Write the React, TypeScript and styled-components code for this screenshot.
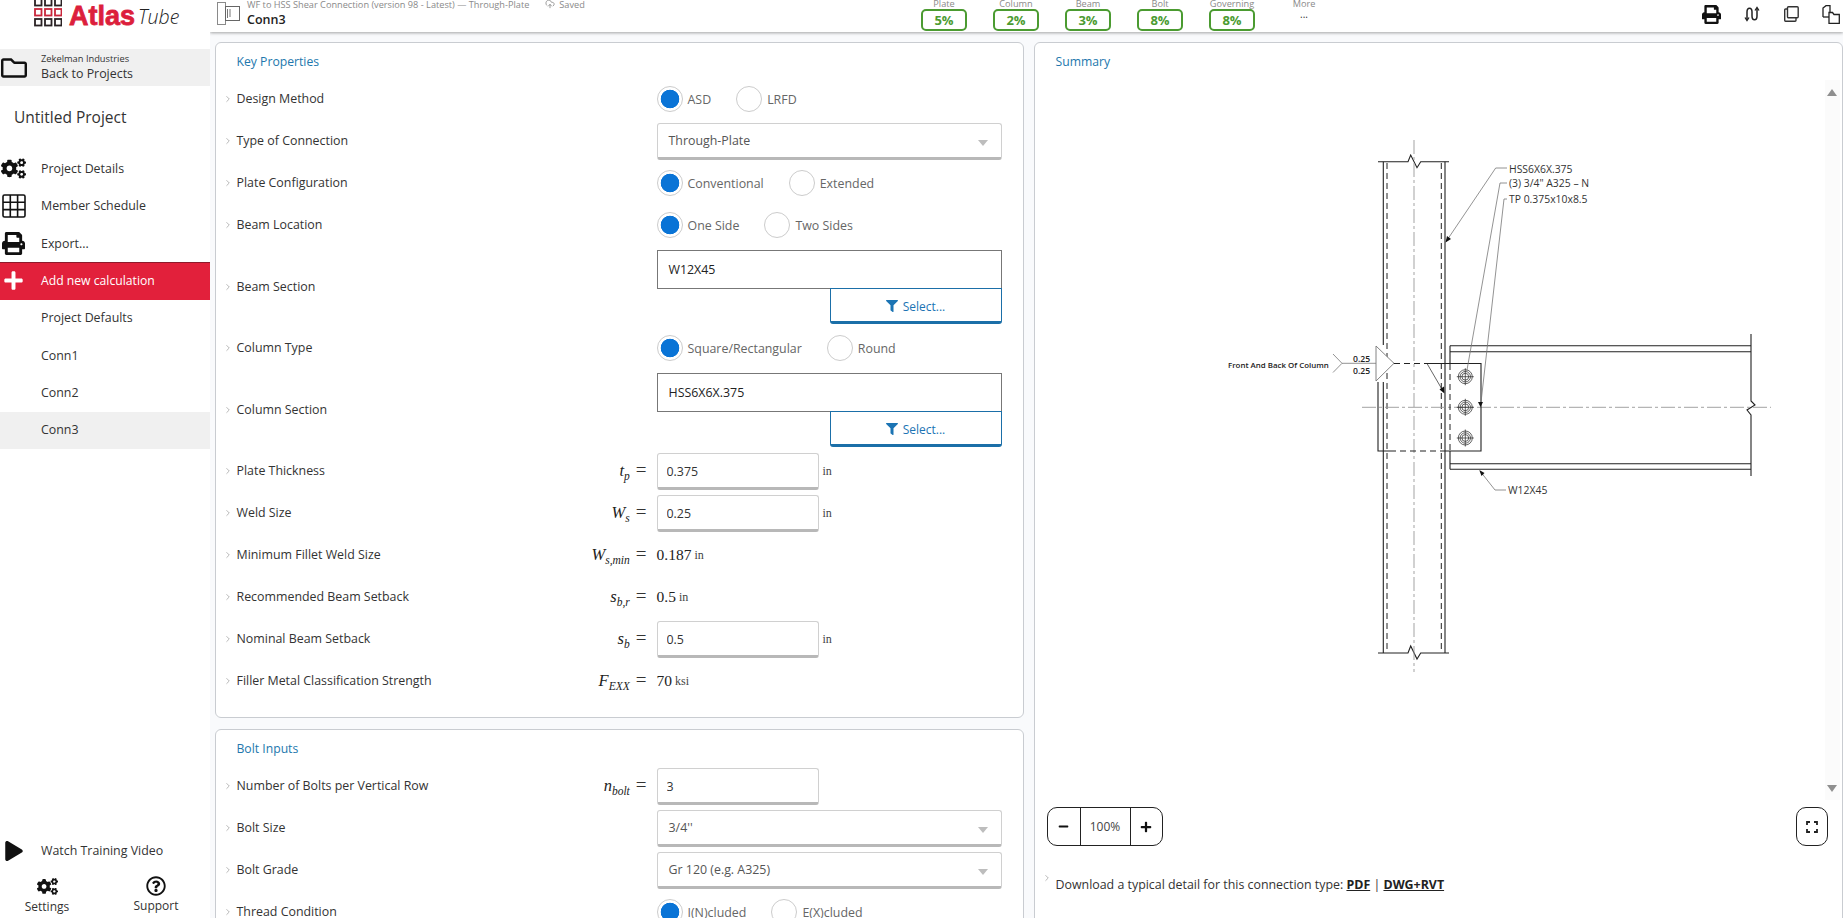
import styled, { createGlobalStyle } from 'styled-components'
import { FaCogs, FaFilter, FaMinus, FaPlay, FaPlus, FaPrint, FaRegFolder, FaRegQuestionCircle } from 'react-icons/fa'
import { ChevronRight, CloudUpload } from 'lucide-react'

const Global = createGlobalStyle`
  html, body { margin: 0; padding: 0; height: 100%; overflow: hidden; }
  body { font-family: "Open Sans", "Liberation Sans", sans-serif; color: #333; background: #fff; }
  * { box-sizing: border-box; }
`

const navItems = ['Project Defaults', 'Conn1', 'Conn2']
const badges = [
  { label: 'Plate', value: '5%' },
  { label: 'Column', value: '2%' },
  { label: 'Beam', value: '3%' },
  { label: 'Bolt', value: '8%' },
  { label: 'Governing', value: '8%' },
]
const bolts = [376.7, 407.3, 438]

const Arrow = () => <Chevron><ChevronRight size={10} strokeWidth={2} /></Chevron>

const LogoSquares = () => (
  <svg width="28" height="27" viewBox="0 0 28 27">
    {[0, 1, 2].map(r =>
      [0, 1, 2].map(c => (
        <rect key={`${r}${c}`} x={1 + c * 10} y={-1 + r * 10} width="6.5" height="6.5" fill="none"
          stroke={r === 1 ? '#c8273c' : '#2a2224'} strokeWidth="1.8" />
      ))
    )}
  </svg>
)

const GridIcon = () => (
  <svg width="24" height="24" viewBox="0 0 24 24" fill="none" stroke="#111" strokeWidth="1.6">
    <rect x="1" y="1" width="22" height="22" rx="1.5" />
    <path d="M8.3 1v22M15.6 1v22M1 8.3h22M1 15.6h22" />
  </svg>
)

const ConnGlyph = () => (
  <svg width="23" height="23" viewBox="0 0 23 23" fill="none" stroke="#8a8a8a" strokeWidth="1">
    <rect x="0.5" y="0.5" width="8" height="22" />
    <rect x="8.5" y="4.5" width="14" height="14" stroke="#666" />
    <path d="M10.5 7v9M12 8h2M12 10h2M12 12h2M12 14h2" stroke="#777" />
  </svg>
)

const SwapIcon = () => (
  <svg width="16" height="16" viewBox="0 0 16 16" fill="none" stroke="#222" strokeWidth="1.5">
    <path d="M3 14V6c0-5 5-5 5 0v4c0 5 5 5 5 0V2" />
    <path d="M1 11.5 3 14.5 5 11.5M11 4.5 13 1.5 15 4.5" strokeWidth="1.3" />
  </svg>
)

const CopyIcon = () => (
  <svg width="15" height="16" viewBox="0 0 15 16" fill="none" stroke="#333" strokeWidth="1.4">
    <rect x="3.5" y="0.8" width="10.7" height="11" rx="1" />
    <path d="M3.5 3H1.5a.8.8 0 0 0-.8.8v10.5c0 .5.3.9.8.9h9.6c.5 0 .9-.4.9-.9v-2.5" />
  </svg>
)

const FilesIcon = () => (
  <svg width="18" height="19" viewBox="0 0 18 19" fill="none" stroke="#222" strokeWidth="1.3">
    <path d="M1 12V3l3-2.3h4V7" />
    <path d="M1 12h6" />
    <path d="M7 7.5h3.5l1.5 2h5.3v8.8H7z" />
  </svg>
)

const CornersIcon = () => (
  <svg width="12" height="12" viewBox="0 0 12 12" fill="none" stroke="#222" strokeWidth="1.8">
    <path d="M1 4V1h3M8 1h3v3M1 8v3h3M8 11h3V8" />
  </svg>
)

const Drawing = () => (
  <svg width="580" height="550" viewBox="1210 130 580 550">
    {/* column */}
    <Heavy d="M1378 161.7H1408L1410.7 155L1417 167.7L1420.7 161.7H1449" />
    <Heavy d="M1378 653H1408L1410.7 646L1417 659L1420.7 653H1449" />
    <Heavy d="M1383.3 161.7V345M1383.3 382V653M1445 161.7V653" />
    <Dash d="M1387 163V653M1441.3 163V653" />
    <Centre d="M1414 140V672" />
    {/* beam */}
    <Heavy d="M1450 345.7H1751M1450 351.7H1751M1450 463.7H1751M1450 469.3H1751" />
    <Heavy d="M1450 345.7V363.5M1450 451V469.3" />
    <Heavy d="M1751 334V401L1755 405L1747 410L1751 415V476" strokeWidth="1" />
    <Centre d="M1362 407.3H1771" />
    {/* plate */}
    <Heavy d="M1427 363.5H1481V451H1445" />
    <Heavy d="M1378 382V451H1390" />
    <Dash d="M1394 363.5H1445M1390 451H1445M1450 364V451" />
    {bolts.map(y => (
      <g key={y}>
        <Thin as="circle" cx="1465.3" cy={y} r="7" />
        <Thin as="circle" cx="1465.3" cy={y} r="5.2" />
        <Thin as="circle" cx="1465.3" cy={y} r="3.4" />
        <Thin d={`M1465.3 ${y - 8.5}V${y + 8.5}M1456.8 ${y}H1473.8`} />
      </g>
    ))}
    {/* weld symbol */}
    <Grey d="M1333 354L1342 363.3L1333 372.5M1342 363.3H1394" />
    <WeldMark d="M1376 346L1394 363.3L1376 381Z" />
    <Thin d="M1427 363.5L1443 391" />
    <path d="M1444.5 393.5L1439.5 389.5L1444 386.5Z" fill="#111" />
    <DrawingBold x="1228" y="368">Front And Back Of Column</DrawingBold>
    <WeldSize x="1353" y="362">0.25</WeldSize>
    <WeldSize x="1353" y="373.5">0.25</WeldSize>
    {/* leaders */}
    <Grey d="M1507 168H1495.7L1446 241.7" />
    <path d="M1445.5 242.5L1447 236L1451 239Z" fill="#111" />
    <DrawingText x="1509" y="173">HSS6X6X.375</DrawingText>
    <Grey d="M1507 183H1500L1466.7 371.7" />
    <DrawingText x="1509" y="187.4">(3) 3/4" A325 – N</DrawingText>
    <Grey d="M1507 199H1504L1480.7 405" />
    <path d="M1480.5 407L1478 402H1483Z" fill="#111" />
    <DrawingText x="1509" y="203">TP 0.375x10x8.5</DrawingText>
    <Grey d="M1506 490H1495L1480 471" />
    <path d="M1479.3 470L1484.5 473L1481.5 476Z" fill="#111" />
    <DrawingText x="1508" y="493.7">W12X45</DrawingText>
  </svg>
)

const App = () => {
  return (
    <Page>
      <Global />
      <Sidebar>
        <LogoBar>
          <LogoSquares />
          <LogoAtlas>Atlas</LogoAtlas>
          <LogoTube>Tube</LogoTube>
        </LogoBar>
        <BackRow>
          <IconSlot><FaRegFolder size={26} color="#111" /></IconSlot>
          <BackText>
            <BackCompany>Zekelman Industries</BackCompany>
            <span>Back to Projects</span>
          </BackText>
        </BackRow>
        <ProjectName>Untitled Project</ProjectName>
        <NavItem><IconSlot><FaCogs size={25} color="#111" /></IconSlot>Project Details</NavItem>
        <NavItem><IconSlot><GridIcon /></IconSlot>Member Schedule</NavItem>
        <NavItem><IconSlot><FaPrint size={23} color="#111" /></IconSlot>Export...</NavItem>
        <AddItem><IconSlot><FaPlus size={21} color="#fff" /></IconSlot>Add new calculation</AddItem>
        {navItems.map(n => (
          <NavItem key={n}><IconSlot />{n}</NavItem>
        ))}
        <NavItem $active><IconSlot />Conn3</NavItem>
        <SideFooter>
          <NavItem><IconSlot><FaPlay size={20} color="#111" /></IconSlot>Watch Training Video</NavItem>
          <FooterLinks>
            <FooterLink><FaCogs size={21} color="#111" />Settings</FooterLink>
            <FooterLink $second><FaRegQuestionCircle size={20} color="#111" />Support</FooterLink>
          </FooterLinks>
        </SideFooter>
      </Sidebar>

      <Main>
        <Header>
          <GlyphSlot><ConnGlyph /></GlyphSlot>
          <TitleBlock>
            <TitleLine>
              <span>WF to HSS Shear Connection (version 98 - Latest) — Through-Plate</span>
              <SavedTag><CloudUpload size={10} />Saved</SavedTag>
            </TitleLine>
            <ConnName>Conn3</ConnName>
          </TitleBlock>
          <Badges>
            {badges.map(b => (
              <BadgeCol key={b.label}>
                <BadgeLabel>{b.label}</BadgeLabel>
                <Badge>{b.value}</Badge>
              </BadgeCol>
            ))}
            <BadgeCol>
              <BadgeLabel>More</BadgeLabel>
              <MoreDots>...</MoreDots>
            </BadgeCol>
          </Badges>
          <HeaderTools>
            <FaPrint size={19} color="#111" />
            <SwapIcon />
            <CopyIcon />
            <FilesIcon />
          </HeaderTools>
        </Header>

        <Content>
          <FormColumn>
            <Panel>
              <PanelTitle>Key Properties</PanelTitle>
              <Row>
                <Arrow /><RowLabel>Design Method</RowLabel><MathCell />
                <Radios>
                  <Radio $on>ASD</Radio>
                  <Radio>LRFD</Radio>
                </Radios>
              </Row>
              <Row>
                <Arrow /><RowLabel>Type of Connection</RowLabel><MathCell />
                <SelectBox>Through-Plate</SelectBox>
              </Row>
              <Row>
                <Arrow /><RowLabel>Plate Configuration</RowLabel><MathCell />
                <Radios>
                  <Radio $on>Conventional</Radio>
                  <Radio>Extended</Radio>
                </Radios>
              </Row>
              <Row>
                <Arrow /><RowLabel>Beam Location</RowLabel><MathCell />
                <Radios>
                  <Radio $on>One Side</Radio>
                  <Radio>Two Sides</Radio>
                </Radios>
              </Row>
              <Row $tall>
                <Arrow /><RowLabel>Beam Section</RowLabel><MathCell />
                <SectionField>
                  <SectionValue>W12X45</SectionValue>
                  <SelectButton><FaFilter size={12} />Select...</SelectButton>
                </SectionField>
              </Row>
              <Row>
                <Arrow /><RowLabel>Column Type</RowLabel><MathCell />
                <Radios>
                  <Radio $on>Square/Rectangular</Radio>
                  <Radio>Round</Radio>
                </Radios>
              </Row>
              <Row $tall>
                <Arrow /><RowLabel>Column Section</RowLabel><MathCell />
                <SectionField>
                  <SectionValue>HSS6X6X.375</SectionValue>
                  <SelectButton><FaFilter size={12} />Select...</SelectButton>
                </SectionField>
              </Row>
              <Row>
                <Arrow /><RowLabel>Plate Thickness</RowLabel>
                <MathCell><Sym>t<sub>p</sub></Sym><Eq>=</Eq></MathCell>
                <ValueLine><NumInput value="0.375" readOnly /><Unit>in</Unit></ValueLine>
              </Row>
              <Row>
                <Arrow /><RowLabel>Weld Size</RowLabel>
                <MathCell><Sym>W<sub>s</sub></Sym><Eq>=</Eq></MathCell>
                <ValueLine><NumInput value="0.25" readOnly /><Unit>in</Unit></ValueLine>
              </Row>
              <Row>
                <Arrow /><RowLabel>Minimum Fillet Weld Size</RowLabel>
                <MathCell><Sym>W<sub>s,min</sub></Sym><Eq>=</Eq></MathCell>
                <ValueLine><MathValue>0.187</MathValue><MathUnit>in</MathUnit></ValueLine>
              </Row>
              <Row>
                <Arrow /><RowLabel>Recommended Beam Setback</RowLabel>
                <MathCell><Sym>s<sub>b,r</sub></Sym><Eq>=</Eq></MathCell>
                <ValueLine><MathValue>0.5</MathValue><MathUnit>in</MathUnit></ValueLine>
              </Row>
              <Row>
                <Arrow /><RowLabel>Nominal Beam Setback</RowLabel>
                <MathCell><Sym>s<sub>b</sub></Sym><Eq>=</Eq></MathCell>
                <ValueLine><NumInput value="0.5" readOnly /><Unit>in</Unit></ValueLine>
              </Row>
              <Row>
                <Arrow /><RowLabel>Filler Metal Classification Strength</RowLabel>
                <MathCell><Sym>F<sub>EXX</sub></Sym><Eq>=</Eq></MathCell>
                <ValueLine><MathValue>70</MathValue><MathUnit>ksi</MathUnit></ValueLine>
              </Row>
            </Panel>
            <Panel>
              <PanelTitle>Bolt Inputs</PanelTitle>
              <Row>
                <Arrow /><RowLabel>Number of Bolts per Vertical Row</RowLabel>
                <MathCell><Sym>n<sub>bolt</sub></Sym><Eq>=</Eq></MathCell>
                <ValueLine><NumInput value="3" readOnly /></ValueLine>
              </Row>
              <Row>
                <Arrow /><RowLabel>Bolt Size</RowLabel><MathCell />
                <SelectBox>3/4''</SelectBox>
              </Row>
              <Row>
                <Arrow /><RowLabel>Bolt Grade</RowLabel><MathCell />
                <SelectBox>Gr 120 (e.g. A325)</SelectBox>
              </Row>
              <Row>
                <Arrow /><RowLabel>Thread Condition</RowLabel><MathCell />
                <Radios>
                  <Radio $on>I(N)cluded</Radio>
                  <Radio>E(X)cluded</Radio>
                </Radios>
              </Row>
            </Panel>
          </FormColumn>

          <Summary>
            <SummaryTitle>Summary</SummaryTitle>
            <DrawingRow>
              <Canvas><Drawing /></Canvas>
              <ScrollTrack>
                <ScrollUp />
                <ScrollDown />
              </ScrollTrack>
            </DrawingRow>
            <ZoomBar>
              <ZoomControl>
                <ZoomButton><FaMinus size={11} color="#111" /></ZoomButton>
                <ZoomValue>100%</ZoomValue>
                <ZoomButton><FaPlus size={12} color="#111" /></ZoomButton>
              </ZoomControl>
              <FullButton><CornersIcon /></FullButton>
            </ZoomBar>
            <DownloadRow>
              <DownloadArrow><ChevronRight size={10} strokeWidth={2} /></DownloadArrow>
              <span>Download a typical detail for this connection type: <DownloadLink>PDF</DownloadLink> | <DownloadLink>DWG+RVT</DownloadLink></span>
            </DownloadRow>
          </Summary>
        </Content>
      </Main>
    </Page>
  )
}

export default App

const Page = styled.div`
  display: flex;
  height: 100vh;
  overflow: hidden;
`
const Sidebar = styled.aside`
  width: 210px;
  flex: none;
  display: flex;
  flex-direction: column;
  background: #fff;
  font-size: 12.4px;
`
const LogoBar = styled.div`
  height: 49px;
  flex: none;
  display: flex;
  align-items: flex-start;
  padding-left: 34px;
  overflow: hidden;
`
const LogoAtlas = styled.span`
  font-family: "Liberation Sans", sans-serif;
  font-weight: 700;
  font-size: 27px;
  line-height: 32px;
  color: #dc1f3c;
  margin-left: 7px;
  -webkit-text-stroke: 0.8px #dc1f3c;
`
const LogoTube = styled.span`
  font-family: "Open Sans", sans-serif;
  font-style: italic;
  font-weight: 300;
  font-size: 19.5px;
  line-height: 34px;
  color: #222;
  margin-left: 3px;
`
const BackRow = styled.div`
  height: 37px;
  flex: none;
  display: flex;
  align-items: center;
  background: #f0f0f0;
`
const IconSlot = styled.span`
  width: 27px;
  margin-right: 14px;
  flex: none;
  display: flex;
  justify-content: center;
  align-items: center;
`
const BackText = styled.div`
  display: flex;
  flex-direction: column;
  line-height: 16px;
  padding-bottom: 2px;
`
const BackCompany = styled.span`
  font-size: 9.3px;
  line-height: 14px;
`
const ProjectName = styled.div`
  height: 64.3px;
  flex: none;
  padding: 20px 0 0 14px;
  font-size: 15.5px;
  line-height: 22px;
  color: #333;
`
const NavItem = styled.div<{ $active?: boolean }>`
  height: 37.4px;
  flex: none;
  display: flex;
  align-items: center;
  padding-bottom: 1.5px;
  color: #333;
  background: ${p => (p.$active ? '#f0f0f0' : 'transparent')};
`
const AddItem = styled(NavItem)`
  background: #e2203b;
  color: #fff;
  font-size: 12.2px;
  font-weight: 500;
  border-top: 1px solid #8e1a2b;
`
const SideFooter = styled.div`
  margin-top: auto;
`
const FooterLinks = styled.div`
  height: 48px;
  display: grid;
  grid-template-columns: 94px 116px;
`
const FooterLink = styled.div<{ $second?: boolean }>`
  display: flex;
  flex-direction: column;
  align-items: center;
  gap: 1px;
  padding: 6px 0 0 ${p => (p.$second ? '8px' : '0')};
  font-size: 12px;
  line-height: 18px;
  color: #333;
`
const Main = styled.div`
  flex: 1;
  min-width: 0;
  display: flex;
  flex-direction: column;
  background: #f9fafc;
`
const Header = styled.header`
  height: 32px;
  flex: none;
  display: flex;
  align-items: flex-start;
  background: #fff;
  box-shadow: 0 1px 3px rgba(0, 0, 0, 0.35);
  position: relative;
  clip-path: inset(0 0 -6px 0);
`
const GlyphSlot = styled.div`
  width: 37px;
  flex: none;
  padding: 2px 0 0 7px;
`
const TitleBlock = styled.div`
  width: 674px;
  flex: none;
  margin-top: -3px;
`
const TitleLine = styled.div`
  display: flex;
  align-items: center;
  gap: 14px;
  height: 14px;
  font-size: 9.2px;
  color: #8a8a8a;
`
const SavedTag = styled.span`
  display: flex;
  align-items: center;
  gap: 4px;
  margin-left: 2px;
`
const ConnName = styled.div`
  font-size: 12.5px;
  font-weight: 600;
  line-height: 16px;
  margin-top: 1px;
  color: #222;
`
const Badges = styled.div`
  display: flex;
  gap: 26px;
  flex: none;
`
const BadgeCol = styled.div`
  width: 46px;
  display: flex;
  flex-direction: column;
  align-items: center;
  margin-top: -2px;
  color: #8a8a8a;
`
const BadgeLabel = styled.div`
  font-size: 9.2px;
  line-height: 11px;
  white-space: nowrap;
`
const Badge = styled.div`
  width: 46px;
  height: 22px;
  display: flex;
  align-items: center;
  justify-content: center;
  border: 2px solid #4b9b31;
  border-radius: 5px;
  font-size: 13px;
  font-weight: 700;
  color: #4b9b31;
`
const MoreDots = styled.div`
  font-size: 10px;
  line-height: 10px;
  color: #333;
`
const HeaderTools = styled.div`
  margin-left: auto;
  height: 28px;
  width: 141px;
  padding-right: 3px;
  display: flex;
  align-items: center;
  justify-content: space-between;
`
const Content = styled.div`
  flex: 1;
  min-height: 0;
  overflow: hidden;
  display: grid;
  grid-template-columns: 808.5px 809px;
  column-gap: 10px;
  align-items: start;
  padding: 10px 0 0 5px;
`
const FormColumn = styled.div`
  display: flex;
  flex-direction: column;
  gap: 11px;
`
const Panel = styled.section`
  background: #fff;
  border: 1px solid #c9ccd1;
  border-radius: 6px;
  padding: 0 21px 15px 0;
`
const PanelTitle = styled.h2`
  margin: 0;
  height: 35px;
  padding: 11px 0 0 20.5px;
  font-size: 12.2px;
  font-weight: 400;
  line-height: 16px;
  color: #2277ad;
`
const SummaryTitle = styled(PanelTitle)`
  padding-left: 21px;
`
const Row = styled.div<{ $tall?: boolean }>`
  height: ${p => (p.$tall ? '81px' : '42px')};
  display: grid;
  grid-template-columns: 20.5px 1fr auto 345px;
  align-items: center;
`
const Chevron = styled.span`
  display: flex;
  justify-content: flex-end;
  padding-right: 4px;
  color: #aaa;
`
const RowLabel = styled.span`
  margin-bottom: 1px;
  font-size: 12.4px;
  color: #333;
`
const MathCell = styled.span`
  display: flex;
  justify-content: flex-end;
  align-items: baseline;
  width: 200px;
  padding-right: 10px;
  font-family: "Liberation Serif", serif;
`
const Sym = styled.span`
  font-style: italic;
  font-size: 16.5px;
  color: #222;
  & sub {
    font-size: 11.5px;
    line-height: 0;
  }
`
const Eq = styled.span`
  font-size: 19px;
  line-height: 16px;
  margin-left: 6px;
  color: #333;
`
const Radios = styled.div`
  display: flex;
  gap: 25px;
`
const Radio = styled.span<{ $on?: boolean }>`
  display: flex;
  align-items: center;
  gap: 5px;
  font-size: 12.4px;
  color: #666;
  &::before {
    content: '';
    width: 24px;
    height: 24px;
    border-radius: 50%;
    border: 1px solid #ccc;
    background: ${p => (p.$on ? 'radial-gradient(circle, #0a74d6 0 9px, #fff 9.6px)' : '#fff')};
  }
`
const SelectBox = styled.div`
  position: relative;
  height: 37px;
  padding: 1px 0 0 11px;
  display: flex;
  align-items: center;
  font-size: 12.4px;
  color: #555;
  background: #fff;
  border: 1px solid #d0d0d0;
  border-bottom: 3px solid #b8b8b8;
  border-radius: 3px;
  &::after {
    content: '';
    position: absolute;
    right: 13px;
    top: 16px;
    border: 5px solid transparent;
    border-top: 6px solid #bdbdbd;
  }
`
const SectionField = styled.div`
  display: flex;
  flex-direction: column;
  align-items: flex-end;
`
const SectionValue = styled.div`
  width: 100%;
  height: 39px;
  padding-left: 11px;
  display: flex;
  align-items: center;
  font-size: 12.4px;
  color: #222;
  border: 1px solid #777;
`
const SelectButton = styled.div`
  width: 172px;
  height: 36px;
  margin-top: -1px;
  padding-top: 3px;
  display: flex;
  align-items: center;
  justify-content: center;
  gap: 5px;
  font-size: 12px;
  color: #1b74b4;
  background: #fff;
  border: 1px solid #1b6fa8;
  border-bottom-width: 3px;
  border-radius: 0 0 3px 3px;
`
const ValueLine = styled.div`
  display: flex;
  align-items: center;
`
const NumInput = styled.input`
  width: 162px;
  height: 37px;
  padding: 2px 0 0 9px;
  font-family: inherit;
  font-size: 12.4px;
  color: #333;
  background: #fff;
  border: 1px solid #d0d0d0;
  border-bottom: 3px solid #b8b8b8;
  border-radius: 3px;
  outline: none;
`
const Unit = styled.span`
  margin-left: 4px;
  font-family: "Liberation Serif", serif;
  font-size: 12px;
  color: #444;
`
const MathValue = styled.span`
  font-family: "Liberation Serif", serif;
  font-size: 15.5px;
  color: #222;
`
const MathUnit = styled(Unit)`
  margin-left: 3px;
  font-size: 12px;
`
const Summary = styled.section`
  height: 920px;
  display: flex;
  flex-direction: column;
  background: #fff;
  border: 1px solid #c9ccd1;
  border-radius: 6px;
`
const DrawingRow = styled.div`
  height: 722px;
  flex: none;
  display: flex;
`
const Canvas = styled.div`
  flex: 1;
  padding: 52px 0 0 175px;
`
const ScrollTrack = styled.div`
  width: 15px;
  margin: 2px 2px 0 0;
  display: flex;
  flex-direction: column;
  align-items: center;
  justify-content: space-between;
  padding: 9px 0 8px;
  background: #fbfbfb;
`
const ScrollUp = styled.span`
  border: 5px solid transparent;
  border-top: 0;
  border-bottom: 7px solid #8f8f8f;
`
const ScrollDown = styled.span`
  border: 5px solid transparent;
  border-bottom: 0;
  border-top: 7px solid #8f8f8f;
`
const ZoomBar = styled.div`
  height: 39px;
  margin-top: 7px;
  flex: none;
  display: flex;
  justify-content: space-between;
  padding: 0 14px 0 12px;
`
const ZoomControl = styled.div`
  width: 116px;
  display: grid;
  grid-template-columns: 32px 51px 1fr;
  align-items: stretch;
  border: 1.5px solid #222;
  border-radius: 10px;
`
const ZoomButton = styled.div`
  display: flex;
  align-items: center;
  justify-content: center;
`
const ZoomValue = styled.div`
  display: flex;
  align-items: center;
  justify-content: center;
  font-size: 12px;
  color: #444;
  border-left: 1px solid #222;
  border-right: 1px solid #222;
`
const FullButton = styled.div`
  width: 32px;
  display: flex;
  align-items: center;
  justify-content: center;
  border: 1.5px solid #222;
  border-radius: 10px;
`
const DownloadRow = styled.div`
  margin-top: 27px;
  padding-left: 7px;
  display: flex;
  font-size: 12.4px;
  line-height: 24px;
  color: #333;
`
const DownloadArrow = styled.span`
  width: 14px;
  margin-top: -6px;
  height: 12px;
  flex: none;
  color: #aaa;
`
const DownloadLink = styled.span`
  font-weight: 700;
  text-decoration: underline;
  color: #222;
`
const Heavy = styled.path`
  fill: none;
  stroke: #222;
  stroke-width: 1.1;
`
const Thin = styled.path`
  fill: none;
  stroke: #222;
  stroke-width: 0.7;
`
const Grey = styled.path`
  fill: none;
  stroke: #777;
  stroke-width: 0.8;
`
const Dash = styled.path`
  fill: none;
  stroke: #222;
  stroke-width: 1;
  stroke-dasharray: 6 4;
`
const Centre = styled.path`
  fill: none;
  stroke: #999;
  stroke-width: 0.9;
  stroke-dasharray: 14 3 3 3;
`
const WeldMark = styled.path`
  fill: #fff;
  stroke: #777;
  stroke-width: 0.9;
`
const DrawingText = styled.text`
  font-family: "Open Sans", sans-serif;
  font-size: 10.4px;
  fill: #333;
`
const DrawingBold = styled(DrawingText)`
  font-size: 7.9px;
  font-weight: 600;
  fill: #222;
`
const WeldSize = styled(DrawingText)`
  font-size: 8.6px;
  font-weight: 600;
  fill: #222;
`
